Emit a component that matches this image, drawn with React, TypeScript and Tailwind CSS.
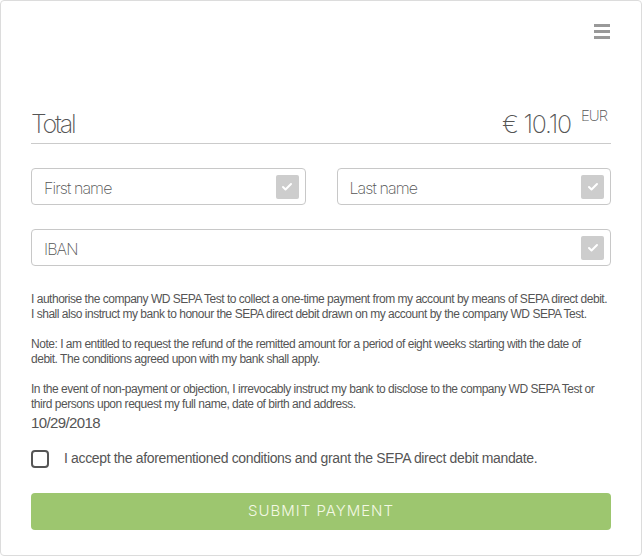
import { Check } from "lucide-react";

const thin = "font-['Inter',sans-serif] font-extralight";
const body = "font-['Liberation_Sans',Arial,sans-serif]";

function Field({ label, className = "" }: { label: string; className?: string }) {
  return (
    <div className={`flex h-[37px] items-center justify-between rounded-[4px] border border-[#c8c8c8] pl-[12px] pr-[6px] ${className}`}>
      <span className={`${thin} pt-[3px] text-[16px] text-[#555] tracking-[-0.9px]`}>{label}</span>
      <span className="flex h-[24px] w-[23px] items-center justify-center rounded-[2px] bg-[#cdcdcd]">
        <Check className="h-[12px] w-[12px] text-white" strokeWidth={4} />
      </span>
    </div>
  );
}

export default function App() {
  return (
    <div className="h-[556px] w-[642px] bg-white">
      <div className="flex h-full flex-col rounded-[4px] border border-[#dcdcdc] px-[30px]">
        {/* Header */}
        <div className="flex justify-end pt-[23px]">
          <button className="mr-[1px] flex w-[16px] flex-col gap-[3px]">
            <span className="h-[3px] bg-[#999]" />
            <span className="h-[3px] bg-[#999]" />
            <span className="h-[3px] bg-[#999]" />
          </button>
        </div>

        {/* Total */}
        <div className="mt-[70px] flex items-end justify-between border-b border-[#cbcbcb] pb-[4px]">
          <span className={`${thin} text-[25px] leading-[30px] text-[#555] tracking-[-2.2px]`}>Total</span>
          <span className="flex items-start">
            <span className={`${thin} text-[25px] leading-[30px] text-[#555] tracking-[-1.2px]`}>€ 10.10</span>
            <span className={`${thin} ml-[10px] mr-[4px] -mt-[4px] text-[15px] text-[#555] tracking-[-1px]`}>EUR</span>
          </span>
        </div>

        {/* Inputs */}
        <div className="mt-[24px] grid grid-cols-2 gap-[31px]">
          <Field label="First name" />
          <Field label="Last name" />
        </div>
        <Field label="IBAN" className="mt-[24px]" />

        {/* Mandate text */}
        <div className={`mt-[26px] ${body} whitespace-nowrap text-[12px] leading-[15px] tracking-[-0.48px] text-[#555]`}>
          <p>
            I authorise the company WD SEPA Test to collect a one-time payment from my account by means of SEPA direct debit.
            <br />
            I shall also instruct my bank to honour the SEPA direct debit drawn on my account by the company WD SEPA Test.
          </p>
          <p className="mt-[15px]">
            Note: I am entitled to request the refund of the remitted amount for a period of eight weeks starting with the date of
            <br />
            debit. The conditions agreed upon with my bank shall apply.
          </p>
          <p className="mt-[15px]">
            In the event of non-payment or objection, I irrevocably instruct my bank to disclose to the company WD SEPA Test or
            <br />
            third persons upon request my full name, date of birth and address.
          </p>
        </div>
        <div className={`mt-[2px] ${body} text-[15px] leading-[18px] tracking-[-0.6px] text-[#555]`}>10/29/2018</div>

        {/* Accept */}
        <label className="mt-[16px] flex items-center gap-[15px]">
          <span className="h-[18px] w-[18px] rounded-[4px] border-2 border-[#555]" />
          <span className={`${body} text-[14px] tracking-[-0.35px] text-[#555]`}>
            I accept the aforementioned conditions and grant the SEPA direct debit mandate.
          </span>
        </label>

        {/* Submit */}
        <button className={`mt-[24px] flex h-[37px] items-center justify-center rounded-[4px] bg-[#9dc66f] ${thin} font-light text-[15px] tracking-[1px] text-[#f3f8e4]`}>
          SUBMIT PAYMENT
        </button>
      </div>
    </div>
  );
}
